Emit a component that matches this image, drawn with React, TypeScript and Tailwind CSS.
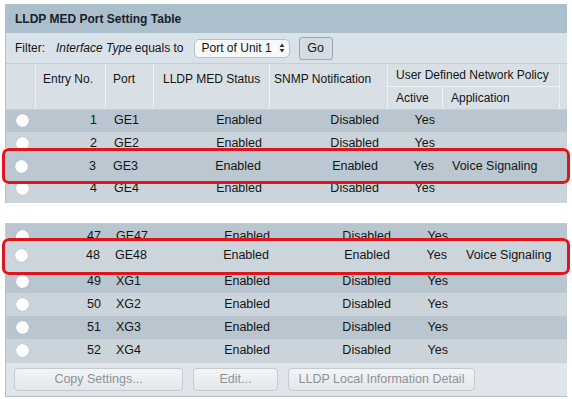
import { useState } from 'react';

type Entry = {
  id: number;
  port: string;
  status: string;
  snmp: string;
  active: string;
  app: string;
};

const topCols = 'grid-cols-[30px_70px_48px_116px_118px_55px_117px_8px]';
const bottomCols = 'grid-cols-[30px_73px_52px_117px_122px_56px_112px]';

const Radio = () => (
  <div className="pl-[10px] flex items-center">
    <div className="w-[13px] h-[13px] rounded-full bg-white shadow-[0_0_1px_rgba(80,95,110,0.5)]" />
  </div>
);

const Cells = ({ e, bottom }: { e: Entry; bottom?: boolean }) => (
  <>
    <Radio />
    <div className={bottom ? 'text-right pr-[8px]' : 'text-right pr-[9px]'}>{e.id}</div>
    <div className={bottom ? 'pl-[7px]' : 'pl-[8px]'}>{e.port}</div>
    <div className="text-right pr-[8px]">{e.status}</div>
    <div className="text-right pr-[9px]">{e.snmp}</div>
    <div className="text-right pr-[8px]">{e.active}</div>
    <div className={bottom ? 'pl-[11px]' : 'pl-[10px]'}>{e.app}</div>
  </>
);

// a row strip; h / shift are full class names so tailwind picks them up
const Row = ({ e, dark, h, shift, bottom }: { e: Entry; dark: boolean; h: string; shift: string; bottom?: boolean }) => (
  <div className={`${h} overflow-hidden ${dark ? 'bg-[#b9c6d0]' : 'bg-[#cbd4db]'}`}>
    <div className={`grid ${bottom ? bottomCols : topCols} h-[23px] items-center text-[12.5px] ${shift}`}>
      <Cells e={e} bottom={bottom} />
    </div>
  </div>
);

const Marked = ({ e, dark, bottom }: { e: Entry; dark: boolean; bottom?: boolean }) => (
  <div className={`-mx-[3px] border-[3px] border-[#e0151c] rounded-[7px] overflow-hidden ${bottom ? 'h-[37px] bg-[#ccd5dc]' : 'h-[36px] bg-[#bcc8d1]'}`}>
    <div className={`grid ${bottom ? bottomCols : topCols} h-full items-center text-[12.5px] ${dark ? 'pb-0' : 'pb-[3px]'}`}>
      <Cells e={e} bottom={bottom} />
    </div>
  </div>
);

const row = (id: number, port: string, snmp = 'Disabled', app = ''): Entry => ({
  id,
  port,
  status: 'Enabled',
  snmp,
  active: 'Yes',
  app,
});

const Btn = ({ children, w }: { children: string; w: string }) => (
  <div className={`${w} h-[23px] flex items-center justify-center rounded-[4px] border border-[#c3cad0] bg-gradient-to-b from-[#f3f5f6] to-[#e3e7ea] text-[#8d9297] text-[12.5px]`}>
    {children}
  </div>
);

const App = () => {
  const [unit] = useState('Port of Unit 1');

  return (
    <div className="w-[572px] h-[399px] bg-white pt-[4px] pl-[5px] font-['Liberation_Sans',Arial,sans-serif] text-[12px] text-[#141414] overflow-hidden">
      <div className="w-[562px]">
        {/* upper part */}
        <div className="border-l border-[#b3c0ca]">
          <div className="h-[29px] bg-[#abbfcd] flex items-center pl-[9px] font-bold text-[12px] text-[#17222b]">
            LLDP MED Port Setting Table
          </div>
          <div className="h-[31px] bg-[#d9e2e8] border-b border-[#c3ced6] flex items-center pl-[9px] text-[12px]">
            <span>Filter:</span>
            <span className="ml-[11px] italic">Interface Type</span>
            <span className="ml-[3px]">equals to</span>
            <div className="ml-[10px] w-[96px] h-[19px] rounded-[5px] border border-[#b7c1c9] bg-[#f6f8f9] flex items-center pl-[7px] text-[12px]">
              <span>{unit}</span>
              <svg className="ml-auto mr-[4px]" width="6" height="10" viewBox="0 0 6 10">
                <path d="M3 0.5 L5.5 4 L0.5 4 Z" fill="#333" />
                <path d="M3 9.5 L5.5 6 L0.5 6 Z" fill="#333" />
              </svg>
            </div>
            <div className="ml-[9px] w-[34px] h-[23px] rounded-[3px] border border-[#97a5b0] bg-[#d3dce3] flex items-center justify-center text-[12.5px]">
              Go
            </div>
          </div>
          <div className={`grid ${topCols} grid-rows-[23px_22px] h-[46px] bg-[#d8e0e6] text-[12px] border-b border-[#c6d0d8]`}>
            <div className="row-span-2 border-r border-[#eef2f5]" />
            <div className="row-span-2 border-r border-[#eef2f5] pl-[7px] pt-[6px]">Entry No.</div>
            <div className="row-span-2 border-r border-[#eef2f5] pl-[7px] pt-[6px]">Port</div>
            <div className="row-span-2 border-r border-[#eef2f5] pl-[9px] pt-[6px]">LLDP MED Status</div>
            <div className="row-span-2 border-r border-[#eef2f5] pl-[4px] pt-[6px]">SNMP Notification</div>
            <div className="col-span-2 border-r border-b border-[#eef2f5] pl-[8px] flex items-center">
              User Defined Network Policy
            </div>
            <div className="row-span-2" />
            <div className="border-r border-[#eef2f5] pl-[8px] flex items-center">Active</div>
            <div className="border-r border-[#eef2f5] pl-[8px] flex items-center">Application</div>
          </div>
          <Row e={row(1, 'GE1')} dark h="h-[22px]" shift="-mt-px" />
          <Row e={row(2, 'GE2')} dark={false} h="h-[16px]" shift="mt-0" />
        </div>
        <Marked e={row(3, 'GE3', 'Enabled', 'Voice Signaling')} dark />
        <div className="border-l border-[#b3c0ca]">
          <Row e={row(4, 'GE4')} dark={false} h="h-[19px]" shift="-mt-[7px]" />
        </div>

        <div className="h-[20px]" />

        {/* lower part */}
        <div className="border-l border-t border-[#c3ccd3]">
          <Row e={row(47, 'GE47')} dark h="h-[14px]" shift="mt-[1px]" bottom />
        </div>
        <Marked e={row(48, 'GE48', 'Enabled', 'Voice Signaling')} dark={false} bottom />
        <div className="border-l border-b border-[#b3c0ca]">
          <Row e={row(49, 'XG1')} dark h="h-[18px]" shift="-mt-[5px]" bottom />
          <Row e={row(50, 'XG2')} dark={false} h="h-[23px]" shift="mt-0" bottom />
          <Row e={row(51, 'XG3')} dark h="h-[23px]" shift="mt-0" bottom />
          <Row e={row(52, 'XG4')} dark={false} h="h-[23px]" shift="mt-0" bottom />
          <div className="h-[34px] bg-[#dfe5ea] border-t border-[#c9d2d9] flex items-center pl-[8px] gap-[10px]">
            <Btn w="w-[169px]">Copy Settings...</Btn>
            <Btn w="w-[85px]">Edit...</Btn>
            <Btn w="w-[187px]">LLDP Local Information Detail</Btn>
          </div>
        </div>
      </div>
    </div>
  );
};

export default App;
